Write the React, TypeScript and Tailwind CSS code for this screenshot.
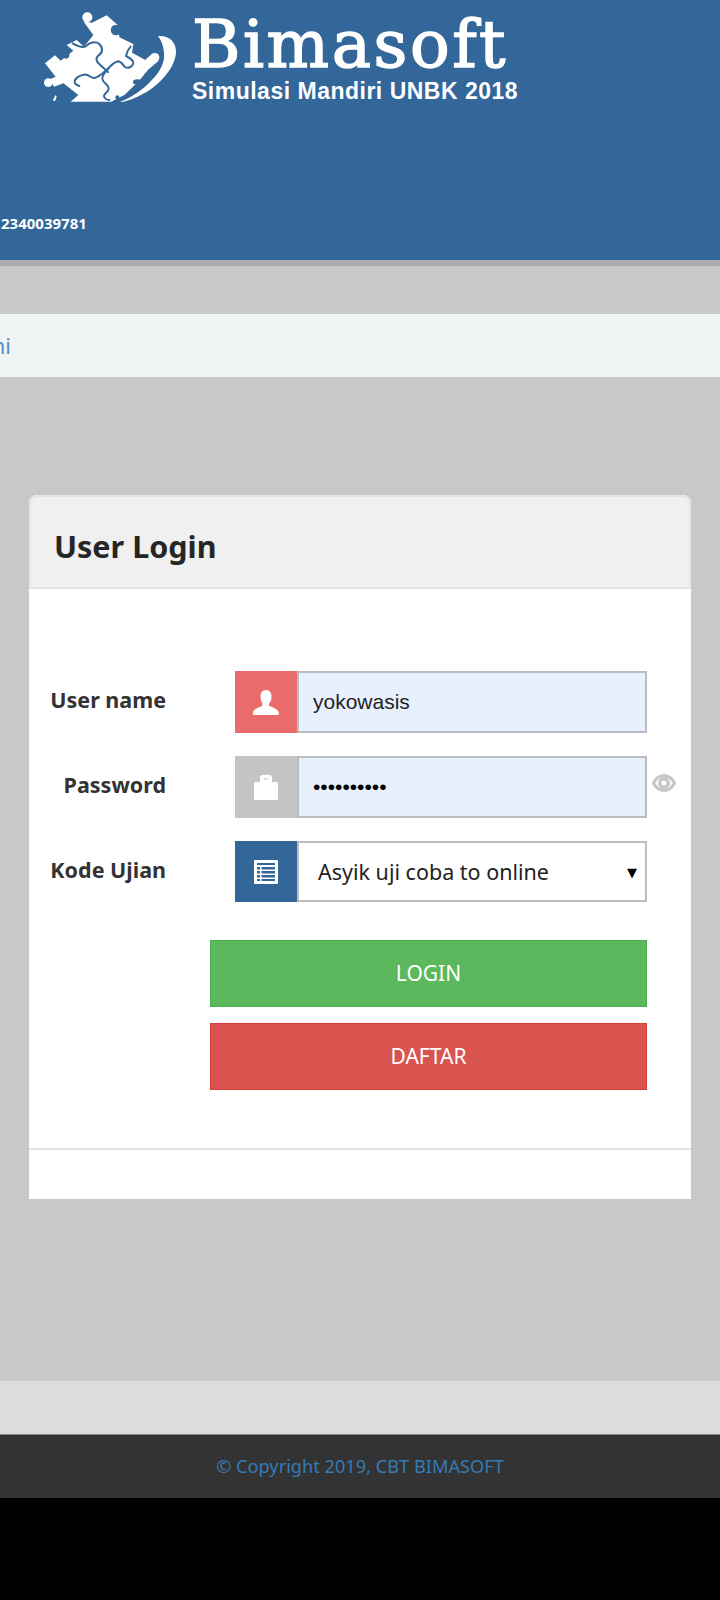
const notoSans = "font-['Noto_Sans','Open_Sans',sans-serif]"

function PuzzleLogo() {
  return (
    <svg viewBox="0 0 480 330" className="h-[110px] w-[160px] shrink-0">
      {/* silhouette of the stacked puzzle pieces */}
      <path
        fill="#fff"
        d="M186 68L230 46 264 76 268 112 310 132 306 158 346 180 362 200 326 244 284 284 244 305H122L145 285 95 245 75 228 45 190 75 166 92 182 130 152 110 135 140 120 162 140 190 105 160 64z"
      />
      <g fill="#fff">
        <circle cx="172" cy="52" r="15" />
        <circle cx="55" cy="248" r="13" />
        <path d="M60 238L95 222 100 250 72 260z" />
        <circle cx="375" cy="172" r="13" />
        <path d="M345 180L368 160 386 182 358 206z" />
      </g>
      {/* notches and seams between the pieces */}
      <g fill="#336699">
        <circle cx="258" cy="90" r="16" />
        <circle cx="108" cy="166" r="10" />
        <ellipse cx="322" cy="246" rx="13" ry="8" />
        <ellipse cx="352" cy="226" rx="10" ry="6" />
        <circle cx="262" cy="292" r="6" />
      </g>
      <g fill="none" stroke="#336699" strokeWidth="6" strokeLinecap="round" strokeLinejoin="round">
        <path d="M128 130c14 8 26 14 38 10 12-12 30-18 42-8 12 12 10 26-2 34-10 8-8 20 4 28l24 22" />
        <path d="M234 206c8-8 18-20 30-22 10 0 14 10 20 16 10 8 24 0 26-10 2-10-14-18-22-22 2-10 6-20 14-28" />
        <path d="M234 206c-12 10-24 24-40 28-12 2-16-12-32-10-14 2-28 10-28 22 0 6 8 10 14 12" />
        <path d="M234 206c-8 12-22 22-16 34 4 10 18 14 18 26 0 10-14 14-14 22 0 8 10 12 16 12" />
      </g>
      {/* swoosh */}
      <path
        fill="#fff"
        d="M384 108c36-2 56 20 54 52-4 36-30 72-68 102-26 20-58 36-92 44h-8c36-14 68-36 92-62 26-26 44-56 40-86-2-22-8-36-18-50z"
      />
      <path fill="#fff" d="M68 302l8-16 4 2-4 14z" />
    </svg>
  )
}

function UserIcon() {
  return (
    <svg viewBox="0 0 26 25" className="h-[25px] w-[26px]" fill="#fff">
      <path d="M13 0c3.600 0 5.500 2.800 5.500 6.500 0 2.800-.8 5.300-2.400 6.900v2.300c3.500 1.400 7.900 3.300 9.400 5.900.5 1 .6 3.400-.5 3.400H.5c-1.100 0-1-2.400-.5-3.400 1.500-2.600 5.900-4.500 9.400-5.900v-2.300C8.300 11.800 7.500 9.300 7.500 6.500 7.500 2.800 9.400 0 13 0z" />
    </svg>
  )
}

function LockIcon() {
  return (
    <svg viewBox="0 0 24 25" className="h-[25px] w-[24px]">
      <path fill="#fff" d="M6 2.500C6 1 7 0 8.500 0h7C17 0 18 1 18 2.500V7h4.500c.8 0 1.500.7 1.500 1.500V23.500c0 .8-.7 1.500-1.500 1.500h-21C.7 25 0 24.300 0 23.500V8.500C0 7.700.7 7 1.500 7H6z" />
      <rect x="9.500" y="3" width="5" height="1.500" fill="#d8d8d8" />
    </svg>
  )
}

function ListIcon() {
  return (
    <svg viewBox="0 0 24 24" className="h-[24px] w-[24px]">
      <rect width="24" height="24" rx="1" fill="#fff" />
      <g fill="#336699">
        <rect x="3" y="3" width="18" height="2" />
        <rect x="3" y="7" width="3" height="2.500" />
        <rect x="7.500" y="7" width="13.500" height="2.500" />
        <rect x="3" y="11" width="3" height="2.500" />
        <rect x="7.500" y="11" width="13.500" height="2.500" />
        <rect x="3" y="15" width="3" height="2.500" />
        <rect x="7.500" y="15" width="13.500" height="2.500" />
        <rect x="3" y="19" width="3" height="2" />
        <rect x="7.500" y="19" width="13.500" height="2" />
      </g>
    </svg>
  )
}

function EyeIcon() {
  return (
    <svg viewBox="0 0 24 18" className="h-[18px] w-[24px]" fill="#c6c6c6">
      <path
        fillRule="evenodd"
        d="M12 0c5.500 0 9.800 3.600 12 9-2.200 5.400-6.500 9-12 9S2.200 14.400 0 9c2.200-5.400 6.500-9 12-9zm0 3C8.800 3 5.300 5.200 3.300 9c2 3.800 5.500 6 8.700 6s6.700-2.200 8.700-6c-2-3.800-5.500-6-8.700-6z"
      />
      <path
        fillRule="evenodd"
        d="M12 3a6 6 0 1 1 0 12 6 6 0 0 1 0-12zm0 3.500a2.500 2.500 0 1 0 0 5 2.500 2.500 0 0 0 0-5z"
      />
    </svg>
  )
}

function FieldRow({
  label,
  iconBg,
  icon,
  className,
  children,
}: {
  label: string
  iconBg: string
  icon: React.ReactNode
  className: string
  children: React.ReactNode
}) {
  return (
    <div className={`flex items-stretch ${className}`}>
      <label className={`w-[137px] shrink-0 pt-[14px] text-right text-[21.500px] leading-[30px] font-bold text-[#333333] ${notoSans}`}>
        {label}
      </label>
      <div className={`ml-[69px] flex w-[62px] shrink-0 items-center justify-center ${iconBg}`}>{icon}</div>
      {children}
    </div>
  )
}

export default function App() {
  return (
    <div className="min-h-[1600px] overflow-hidden bg-black">
      <header className="h-[266px] border-b-[6px] border-[#a9abad] bg-[#336699]">
        <div className="flex h-[110px] overflow-hidden pl-[30px]">
          <PuzzleLogo />
          <div className="ml-[2px] text-white">
            <div className="mt-[10px] font-['DejaVu_Serif',serif] text-[66px] leading-[70px] tracking-[2.500px] [-webkit-text-stroke:1.500px_white]">
              Bimasoft
            </div>
            <div className="font-['Liberation_Sans',sans-serif] text-[23px] leading-[22px] font-bold tracking-[0.5px] whitespace-nowrap">
              Simulasi Mandiri UNBK 2018
            </div>
          </div>
        </div>
        <p className={`mt-[103px] ml-px text-[15px] leading-[20px] font-bold text-white ${notoSans}`}>2340039781</p>
      </header>

      <main className="h-[1115px] overflow-hidden bg-[#c8c8c8] pt-[48px]">
        <div className="flex h-[63px] items-center justify-end bg-[#f0f5f4] pr-[709px] pb-[2px]">
          <span className={`text-[22px] leading-[30px] text-[#4f8fc7] ${notoSans}`}>ni</span>
        </div>

        <section className="mx-[29px] mt-[118px] h-[704px] w-[662px] overflow-hidden rounded-t-[8px] bg-white">
          <div className="flex h-[94px] items-center rounded-t-[8px] border-2 border-[#e4e4e4] bg-[#f0f0f0] pt-[8px] pl-[23px]">
            <h2 className={`text-[30.500px] leading-[40px] font-bold text-[#262626] ${notoSans}`}>User Login</h2>
          </div>

          <div className="h-[561px] border-b-2 border-[#e2e2e2] pt-[82px]">
            <FieldRow label="User name" iconBg="bg-[#e96b6b]" icon={<UserIcon />} className="mb-[23px] h-[62px]">
              <input
                readOnly
                value="yokowasis"
                className="w-[350px] border-2 border-[#b9bcc2] bg-[#e8f0fe] pl-[14px] font-['Liberation_Sans',sans-serif] text-[21px] text-[#222222] outline-none"
              />
            </FieldRow>
            <div className="relative">
              <FieldRow label="Password" iconBg="bg-[#c4c4c4]" icon={<LockIcon />} className="mb-[23px] h-[62px]">
                <input
                  readOnly
                  type="password"
                  value="1234567890"
                  className="w-[350px] border-2 border-[#b9bcc2] bg-[#e8f0fe] pl-[14px] font-['Liberation_Sans',sans-serif] text-[21px] text-black outline-none"
                />
              </FieldRow>
              <div className="absolute top-[18px] left-[623px]">
                <EyeIcon />
              </div>
            </div>
            <FieldRow label="Kode Ujian" iconBg="bg-[#336699]" icon={<ListIcon />} className="h-[61px]">
              <div className={`flex w-[350px] items-center justify-between border-2 border-[#b9bcc2] bg-white pt-[2px] pr-[8px] pl-[19px] text-[21.500px] text-[#222222] ${notoSans}`}>
                <span>Asyik uji coba to online</span>
                <span className="font-['DejaVu_Sans',sans-serif] text-[13px] text-black">▼</span>
              </div>
            </FieldRow>

            <div className="mt-[38px] ml-[181px] flex w-[437px] flex-col gap-[16px]">
              <button className={`h-[67px] border border-[#4cae4c] bg-[#5cb85c] text-[21px] text-white ${notoSans}`}>LOGIN</button>
              <button className={`h-[67px] border border-[#d43f3a] bg-[#d9534f] text-[21px] text-white ${notoSans}`}>DAFTAR</button>
            </div>
          </div>
        </section>
      </main>

      <div className="h-[54px] border-b border-[#8a8a8a] bg-[#dcdcdc]" />
      <footer className="flex h-[63px] items-center justify-center bg-[#333333]">
        <span className={`text-[18.200px] text-[#337ab7] ${notoSans}`}>© Copyright 2019, CBT BIMASOFT</span>
      </footer>
    </div>
  )
}
